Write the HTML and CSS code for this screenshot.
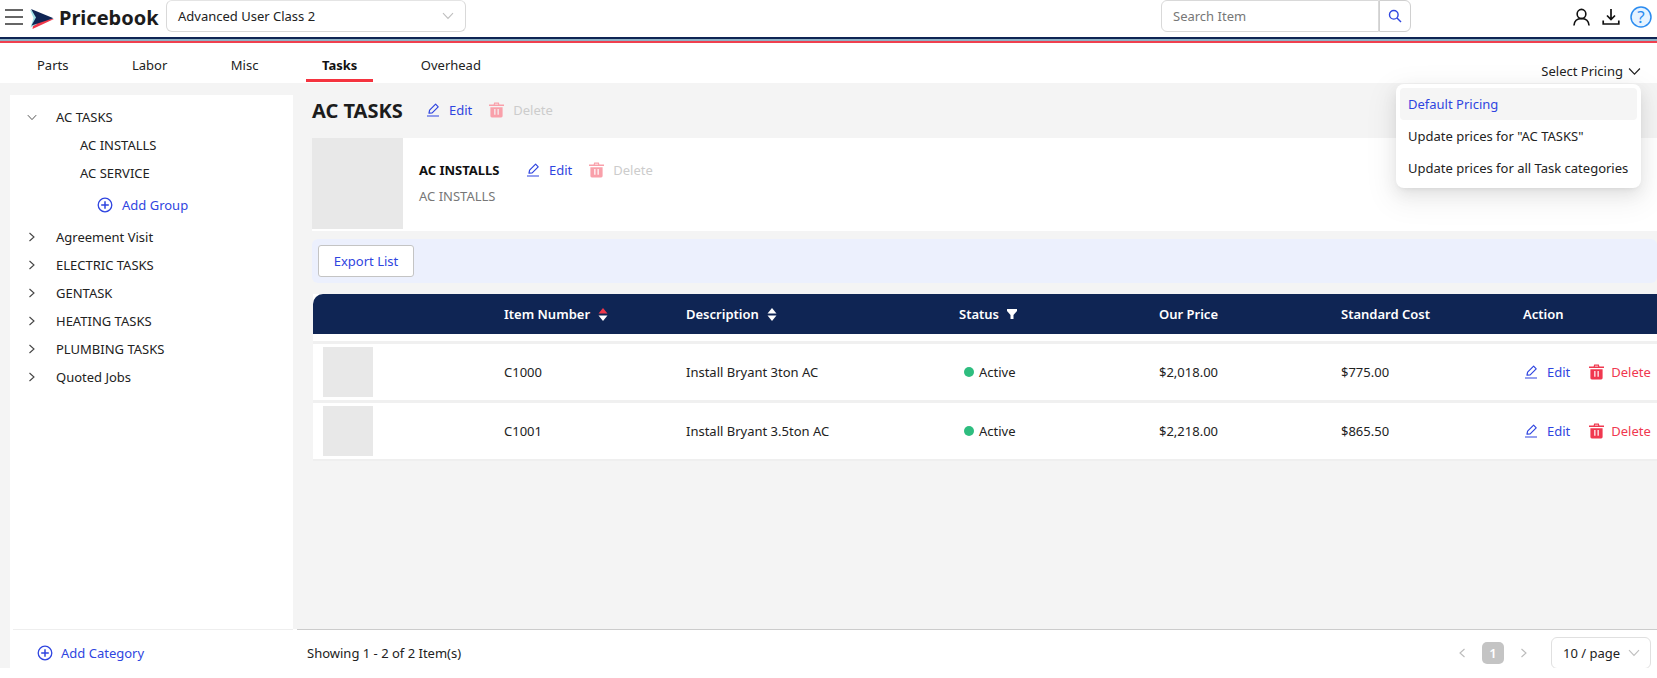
FILE: index.html
```html
<!DOCTYPE html>
<html lang="en">
<head>
<meta charset="utf-8">
<title>Pricebook</title>
<link rel="stylesheet" href="styles.css">
</head>
<body>
<svg class="sprite" aria-hidden="true">
  <symbol id="edit" viewBox="0 0 14 14"><path d="M1 13h12M3 10.2l.6-3L9.6 1.2l2.6 2.6-6 6z" fill="none" stroke="currentColor" stroke-width="1.2" stroke-linejoin="round"/></symbol>
  <symbol id="trash" viewBox="0 0 16 16"><path fill="currentColor" fill-rule="evenodd" d="M5.5 0h5l.6 2H16v1.8H0V2h4.9zM6.4 1.2 6.2 2h3.6l-.2-.8zM1.5 5h13v9.5a1.5 1.5 0 0 1-1.5 1.5H3a1.5 1.5 0 0 1-1.5-1.5zM5.6 7v6h1.3V7zm3.5 0v6h1.3V7z"/></symbol>
  <symbol id="plus" viewBox="0 0 16 16"><circle cx="8" cy="8" r="6.8" fill="none" stroke="currentColor" stroke-width="1.3"/><path d="M8 4.2v7.6M4.2 8h7.6" stroke="currentColor" stroke-width="1.5"/></symbol>
  <symbol id="right" viewBox="0 0 8 10"><path d="M1.5 1 6 5 1.5 9" fill="none" stroke="currentColor" stroke-width="1.1"/></symbol>
  <symbol id="down" viewBox="0 0 12 8"><path d="M1 1.2 6 6.5l5-5.3" fill="none" stroke="currentColor" stroke-width="1.1"/></symbol>
</svg>
<div class="app">
  <header class="topbar">
    <button class="menu" aria-label="Menu"><span></span><span></span><span></span></button>
    <svg class="logo" viewBox="0 0 24 20" aria-hidden="true">
      <path d="M4 11 2.500 20 24 10z" fill="#f0384a"/>
      <path d="M0 .5 3.500 9 .5 18.500 7 15V5z" fill="#9fe0e6"/>
      <path d="M1 0 23.500 9.200 1.500 16.500 6 8.500z" fill="#0f2554"/>
    </svg>
    <span class="brand">Pricebook</span>
    <div class="class-select"><span>Advanced User Class 2</span><svg class="chev"><use href="#down"/></svg></div>
    <div class="search">
      <div class="search-input">Search Item</div>
      <button class="search-btn" aria-label="Search"><svg viewBox="0 0 14 14" width="14" height="14"><circle cx="5.800" cy="5.800" r="4.300" fill="none" stroke="currentColor" stroke-width="1.400"/><path d="m9 9 4 4" stroke="currentColor" stroke-width="1.500"/></svg></button>
    </div>
    <svg class="top-ico user" viewBox="0 0 18 18" preserveAspectRatio="none" aria-hidden="true"><circle cx="9" cy="6" r="4.600" fill="none" stroke="#111" stroke-width="1.700"/><path d="M1 17.500c.4-4.600 3.400-7 8-7s7.600 2.400 8 7" fill="none" stroke="#111" stroke-width="1.700"/></svg>
    <svg class="top-ico dl" viewBox="0 0 18 18" aria-hidden="true"><path d="M9 1v10M5 7.500 9 11.500l4-4M1.200 12.500v3.500h15.600v-3.500" fill="none" stroke="#111" stroke-width="1.700"/></svg>
    <svg class="top-ico help" viewBox="0 0 22 22" aria-hidden="true"><circle cx="11" cy="11" r="10" fill="#e6f3ff" stroke="#2b8cf0" stroke-width="1.500"/><text x="11" y="16.500" text-anchor="middle" class="help-q">?</text></svg>
  </header>
  <div class="stripes"></div>
  <nav class="tabs">
    <a class="tab">Parts</a><a class="tab">Labor</a><a class="tab">Misc</a><a class="tab tab-on">Tasks</a><a class="tab">Overhead</a>
    <div class="pricing"><span>Select Pricing</span><svg class="pricing-chev"><use href="#down"/></svg></div>
  </nav>
  <div class="content">
    <aside class="sidebar">
      <ul class="tree">
        <li class="node"><svg class="arrow-d"><use href="#down"/></svg><span>AC TASKS</span></li>
        <li class="node sub">AC INSTALLS</li>
        <li class="node sub">AC SERVICE</li>
        <li class="add-group"><svg class="plus"><use href="#plus"/></svg>Add Group</li>
        <li class="node"><svg class="arrow"><use href="#right"/></svg><span>Agreement Visit</span></li>
        <li class="node"><svg class="arrow"><use href="#right"/></svg><span>ELECTRIC TASKS</span></li>
        <li class="node"><svg class="arrow"><use href="#right"/></svg><span>GENTASK</span></li>
        <li class="node"><svg class="arrow"><use href="#right"/></svg><span>HEATING TASKS</span></li>
        <li class="node"><svg class="arrow"><use href="#right"/></svg><span>PLUMBING TASKS</span></li>
        <li class="node"><svg class="arrow"><use href="#right"/></svg><span>Quoted Jobs</span></li>
      </ul>
      <div class="add-cat"><svg class="plus"><use href="#plus"/></svg>Add Category</div>
    </aside>
    <main class="main">
      <div class="scroll">
        <div class="title-row">
          <h1 class="title">AC TASKS</h1>
          <span class="act act-edit"><svg class="i-edit"><use href="#edit"/></svg>Edit</span>
          <span class="act act-off"><svg class="i-trash"><use href="#trash"/></svg>Delete</span>
        </div>
        <section class="card">
          <div class="card-thumb"></div>
          <div class="card-body">
            <div class="card-head">
              <h2 class="card-title">AC INSTALLS</h2>
              <span class="act act-edit"><svg class="i-edit"><use href="#edit"/></svg>Edit</span>
              <span class="act act-off"><svg class="i-trash"><use href="#trash"/></svg>Delete</span>
            </div>
            <p class="card-sub">AC INSTALLS</p>
          </div>
        </section>
        <div class="band"><button class="export">Export List</button></div>
        <div class="table">
          <div class="thead">
            <div></div>
            <div class="th">Item Number <svg class="sort" viewBox="0 0 10 13"><path d="M5 0 9.500 5.500H.5z" fill="#f0384a"/><path d="M5 13 .5 7.500h9z" fill="#fff"/></svg></div>
            <div class="th">Description <svg class="sort" viewBox="0 0 10 13"><path d="M5 0 9.500 5.500H.5z" fill="#fff"/><path d="M5 13 .5 7.500h9z" fill="#fff"/></svg></div>
            <div class="th">Status <svg class="funnel" viewBox="0 0 10 10"><path d="M0 0h10v2L6.500 6v4h-3V6L0 2z" fill="#fff"/></svg></div>
            <div class="th">Our Price</div>
            <div class="th">Standard Cost</div>
            <div class="th">Action</div>
          </div>
          <div class="spacer"></div>
          <div class="row">
            <div><div class="thumb"></div></div>
            <div>C1000</div>
            <div>Install Bryant 3ton AC</div>
            <div class="status"><i class="dot"></i>Active</div>
            <div>$2,018.00</div>
            <div>$775.00</div>
            <div class="actions"><span class="act act-edit"><svg class="i-edit"><use href="#edit"/></svg>Edit</span><span class="act act-del"><svg class="i-trash"><use href="#trash"/></svg>Delete</span></div>
          </div>
          <div class="row">
            <div><div class="thumb"></div></div>
            <div>C1001</div>
            <div>Install Bryant 3.5ton AC</div>
            <div class="status"><i class="dot"></i>Active</div>
            <div>$2,218.00</div>
            <div>$865.50</div>
            <div class="actions"><span class="act act-edit"><svg class="i-edit"><use href="#edit"/></svg>Edit</span><span class="act act-del"><svg class="i-trash"><use href="#trash"/></svg>Delete</span></div>
          </div>
        </div>
      </div>
      <footer class="footer">
        <span class="showing">Showing 1 - 2 of 2 Item(s)</span>
        <div class="pager">
          <svg class="pg-arrow flip"><use href="#right"/></svg>
          <span class="pg-num">1</span>
          <svg class="pg-arrow"><use href="#right"/></svg>
          <div class="page-size"><span>10 / page</span><svg class="chev"><use href="#down"/></svg></div>
        </div>
      </footer>
    </main>
  </div>
</div>
<div class="dropdown">
  <div class="dd-item dd-on">Default Pricing</div>
  <div class="dd-item">Update prices for "AC TASKS"</div>
  <div class="dd-item">Update prices for all Task categories</div>
</div>
</body>
</html>
```
FILE: styles.css
```css
* { box-sizing: border-box; }
html, body { margin: 0; padding: 0; height: 100%; background: #fff; overflow: hidden; }
body { font-family: "Noto Sans", "Open Sans", sans-serif; font-size: 13px; color: #222; position: relative; }
.sprite { position: absolute; width: 0; height: 0; }
button { font: inherit; }
ul { list-style: none; margin: 0; padding: 0; }
h1, h2, p { margin: 0; }
.app { width: 1657px; height: 668px; display: flex; flex-direction: column; }

.topbar { height: 37px; display: flex; align-items: flex-start; padding-left: 5px; flex: none; }
.menu { width: 18px; height: 16px; margin-top: 9px; padding: 0; border: 0; background: none; display: flex; flex-direction: column; justify-content: space-between; }
.menu span { display: block; height: 2px; background: #666; }
.logo { width: 24px; height: 20px; margin: 9px 0 0 7px; }
.brand { font-size: 20px; font-weight: 700; color: #1c1c1c; margin-left: 5px; line-height: 36px; font-family: "Noto Sans", sans-serif; width: 107px; }
.class-select { width: 300px; height: 32px; border: 1px solid #d9d9d9; border-top-color: #e4e4e4; border-radius: 6px; display: flex; align-items: center; justify-content: space-between; padding: 0 11px; color: #222; }
.chev { width: 12px; height: 8px; color: #bfbfbf; }
.search { display: flex; margin-left: 695px; }
.search-input { width: 218px; height: 32px; border: 1px solid #d9d9d9; border-radius: 6px 0 0 6px; padding: 0 11px; line-height: 30px; color: #777; }
.search-btn { width: 32px; height: 32px; padding: 0; border: 1px solid #d0d0d0; border-radius: 0 6px 6px 0; background: #fff; color: #2f45e0; display: flex; align-items: center; justify-content: center; }
.top-ico { display: block; }
.user { width: 17px; height: 18px; margin: 8px 0 0 162px; }
.dl { width: 18px; height: 18px; margin: 8px 0 0 12px; }
.help { width: 22px; height: 22px; margin: 6px 0 0 10px; }
.help-q { font-size: 17px; fill: #2b8cf0; font-family: "Noto Sans", sans-serif; }

.stripes { height: 6px; flex: none; background: linear-gradient(#0f2554 0 1.500px, #fff 1.500px 2px, #8fb2c4 2px 4px, #f0404f 4px 6px); }

.tabs { height: 40px; flex: none; display: flex; gap: 31.500px; padding-left: 21px; position: relative; }
.tab { padding: 0 16px; line-height: 44px; height: 39px; color: #222; }
.tab-on { font-weight: 700; color: #111; border-bottom: 3px solid #f5333f; }
.pricing { margin-left: auto; display: flex; align-items: center; gap: 5px; height: 56px; padding-right: 16px; color: #222; }
.pricing-chev { width: 13px; height: 9px; color: #222; }

.content { flex: 1; min-height: 0; display: flex; background: #f4f4f4; }
.sidebar { width: 283px; margin: 12px 0 0 10px; background: #fff; display: flex; flex-direction: column; flex: none; }
.tree { flex: 1; padding-top: 8px; }
.node { height: 28px; display: flex; align-items: center; padding-left: 18px; color: #222; }
.sub { padding-left: 70px; }
.arrow { width: 8px; height: 10px; margin-right: 20px; color: #444; }
.arrow-d { width: 10px; height: 7px; margin: 0 19px 0 -1px; color: #444; }
.plus { width: 16px; height: 16px; color: #2f45e0; margin-right: 9px; flex: none; }
.add-group { height: 36px; display: flex; align-items: center; padding-left: 87px; color: #2f45e0; }
.add-cat { height: 39px; flex: none; display: flex; align-items: center; padding: 9px 0 0 27px; background: linear-gradient(#eee, #eee) no-repeat 3px 0 / 100% 1px; color: #2f45e0; }
.add-cat .plus { margin-right: 8px; }

.main { flex: 1; min-width: 0; display: flex; flex-direction: column; overflow: hidden; }
.scroll { flex: 1; min-height: 0; padding: 12px 0 0 19px; overflow: hidden; }
.title-row { height: 43px; display: flex; align-items: center; padding-bottom: 13px; }
.title { font-size: 20px; font-weight: 700; color: #1c1c1c; width: 114px; }
.act { display: inline-flex; align-items: center; }
.act-edit { color: #2f45e0; }
.act-off { color: #ccc; }
.act-off svg { color: #f9a0aa; }
.act-del { color: #f0384f; }
.i-edit { width: 14px; height: 14px; margin-right: 9px; }
.i-trash { width: 15px; height: 16px; margin-right: 9px; }
.title-row .act-off, .card-head .act-off { margin-left: 17px; }
.card { height: 93px; background: #fff; display: flex; }
.card-thumb { width: 91px; height: 91px; background: #e8e8e8; flex: none; }
.card-body { padding: 19px 0 0 16px; }
.card-head { display: flex; align-items: center; height: 26px; }
.card-title { font-size: 13px; font-weight: 700; color: #111; width: 107px; }
.card-sub { color: #777; line-height: 26px; }
.band { height: 44px; margin-top: 8px; background: #ecf0fd; border-radius: 6px; padding: 6px; }
.export { width: 96px; height: 32px; padding: 0; border: 1px solid #c4c4c4; border-radius: 3px; background: #fff; color: #2f45e0; }
.table { width: 1400px; margin: 11px 0 0 1px; background: #fff; }
.thead, .row { display: grid; grid-template-columns: 191px 182px 273px 200px 182px 182px 1fr; align-items: center; }
.thead { height: 40px; background: #0f2554; border-radius: 10px 10px 0 0; color: #fff; font-weight: 600; }
.th { display: flex; align-items: center; gap: 8px; }
.sort { width: 10px; height: 13px; }
.funnel { width: 10px; height: 10px; }
.spacer { height: 7px; }
.row { height: 59px; border-top: 3px solid #f0f0f0; color: #222; }
.row:last-child { height: 61px; border-bottom: 2px solid #efefef; }
.thumb { width: 50px; height: 50px; background: #e8e8e8; margin-left: 10px; }
.status { display: flex; align-items: center; padding-left: 5px; }
.dot { width: 10px; height: 10px; border-radius: 50%; background: #2ebd7f; margin-right: 5px; }
.actions { display: flex; padding-left: 1px; }
.actions .act-del { margin-left: 19px; }
.actions .i-trash { margin-right: 7px; }

.footer { height: 39px; flex: none; background: linear-gradient(#ccc, #ccc) no-repeat 4px 0 / 100% 1px, #fff; display: flex; align-items: center; justify-content: space-between; padding: 8px 6px 0 14px; }
.showing { color: #222; }
.pager { display: flex; align-items: center; }
.pg-arrow { width: 8px; height: 10px; color: #bbb; }
.flip { transform: scaleX(-1); }
.pg-num { width: 22px; height: 22px; margin: 0 16px; background: #c4c4c4; color: #fff; border-radius: 5px; display: flex; align-items: center; justify-content: center; font-weight: 600; }
.page-size { width: 100px; height: 32px; margin-left: 23px; border: 1px solid #e0e0e0; border-radius: 6px; display: flex; align-items: center; justify-content: space-between; padding: 0 10px 0 11px; color: #222; }

.dropdown { position: absolute; left: 1396px; top: 84px; width: 245px; height: 104px; padding: 4px; background: #fff; border-radius: 8px; box-shadow: 0 6px 16px rgba(0,0,0,.08), 0 3px 6px -4px rgba(0,0,0,.12), 0 9px 28px 8px rgba(0,0,0,.05); }
.dd-item { height: 32px; line-height: 32px; padding: 0 8px; border-radius: 4px; color: #222; white-space: nowrap; }
.dd-on { background: #f5f5f5; color: #2f45e0; }
```
